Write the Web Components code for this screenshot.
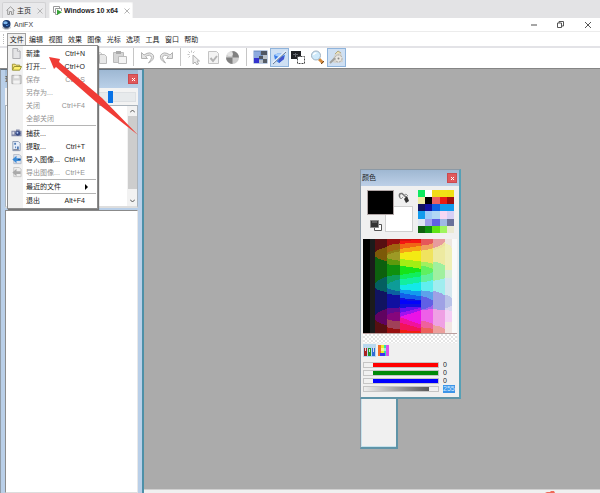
<!DOCTYPE html>
<html lang="zh-CN">
<head>
<meta charset="utf-8">
<title>AniFX</title>
<style>
body{margin:0;background:#ababab;color:#1c1c1c;font:7px/10px "Liberation Sans","Noto Sans CJK SC",sans-serif}
</style>
</head>
<body>
<ani-app></ani-app>
<script>
const base = `*{box-sizing:border-box}button,input{font:inherit;color:inherit;border:0;padding:0;margin:0;background:none;border-radius:0}svg{display:block}`;
function define(name, css, html, setup) {
  const t = document.createElement('template');
  t.innerHTML = `<style>${base}${css}</style>${html}`;
  customElements.define(name, class extends HTMLElement {
    constructor() {
      super();
      this.attachShadow({ mode: 'open' }).append(t.content.cloneNode(true));
      if (setup) setup(this.shadowRoot, this);
    }
  });
}

const closeX = `<svg width="6" height="6" viewBox="0 0 6 6"><path d="M.5.5 5.500 5.500M5.500.5.5 5.500" stroke="#b4b4b4" fill="none"/></svg>`;

define('vm-tabs', `
:host{display:flex;height:18px;background:#e3e3e5;padding:2px 2px 0;gap:3px}
.tab{display:flex;align-items:center;height:16px;padding:0 2px 0 3px;border-radius:2px 2px 0 0;background:#e9e9eb;border:1px solid #d2d2d4;border-bottom:0}
.tab.on{background:#fff;font-weight:bold;border-color:#f4f4f4}
.tab button{display:flex;align-items:center}
.name{gap:2px}
.close{margin-left:6px}`,
`<div class="tab"><button class="name"><svg width="9" height="9" viewBox="0 0 9 9" fill="none" stroke="#999"><path d="M.5 4.500 4.500.8 8.500 4.500M1.700 4V8.500H3.500V5.500h2v3h1.800V4"/></svg>主页</button><button class="close" aria-label="关闭主页">${closeX}</button></div>
<div class="tab on"><button class="name"><svg width="9" height="9" viewBox="0 0 9 9" fill="none"><path d="M6.500 2.500V.5h-6v6h2M8.500 5V2.500h-6v6H5" stroke="#9a9a9a"/><path d="M4 3.500 9 6.300 4 9z" fill="#39a339"/></svg>Windows 10 x64</button><button class="close" aria-label="关闭虚拟机">${closeX}</button></div>`);

define('title-bar', `
:host{display:flex;align-items:center;height:14px;background:#fff;border-bottom:1px solid #ececec;padding:0 9px 0 2px;gap:3px;color:#444}
.win{margin-left:auto;display:flex;gap:20px}
.win button{width:7px;height:9px;display:flex;align-items:center;justify-content:center}`,
`<svg width="9" height="10" viewBox="0 0 9 10"><path d="M1 5.500h7L9 8 6 9.800H3L0 8z" fill="#bfc4ce"/><circle cx="4.500" cy="4" r="4" fill="#16376e"/><ellipse cx="3.500" cy="2.800" rx="2.200" ry="1.500" fill="#7eb7ee"/><path d="M4 5.500q2 .8 3-1.200" stroke="#4b8ce0" fill="none"/><path d="M2.500 8h4" stroke="#454c5c"/></svg><span>AniFX</span>
<span class="win"><button aria-label="最小化"><svg width="6" height="2"><path d="M0 1h6" stroke="#888" stroke-width="1.500"/></svg></button>
<button aria-label="还原"><svg width="7" height="7" viewBox="0 0 7 7" fill="none" stroke="#555"><path d="M.5 2h4v4.500h-4zM2 2V.5h4.500V5H4.500"/></svg></button>
<button aria-label="关闭"><svg width="6" height="6" viewBox="0 0 6 6"><path d="m0 0 6 6M6 0 0 6" stroke="#555"/></svg></button></span>`);

define('menu-bar', `
:host{display:flex;height:16px;background:#fff;border-bottom:2px solid #e3e3e7;padding-left:3px}
.grip{width:4px;margin:2px 0;border-left:1px dotked #bbb;border-left:1px dotted #bbb}
nav{display:grid;grid-template-columns:repeat(10,1fr);flex:0 0 194px}
button{white-space:nowrap;padding-top:1px}
button[aria-expanded]{background:#f0f0f0;border:1px solid #a2a2a2;border-bottom:0;padding-top:0;margin-top:1px}`,
`<span class="grip"></span><nav><button aria-expanded="true">文件</button><button>编辑</button><button>视图</button><button>效果</button><button>图像</button><button>光标</button><button>选项</button><button>工具</button><button>窗口</button><button>帮助</button></nav>`);

const arrowL = `<path d="M5.500 2 1 6l4.500 4V7.500H10v-3H5.500z"`;
const icons = {
  none: '',
  doc: `<path d="M1.500.5h5l3 3v8h-8z" fill="#e4e4e6" stroke="#a9a9ad"/><path d="M6.500.5v3h3" fill="#fff" stroke="#a9a9ad"/>`,
  open: `<path d="M1 9.500v-6h3l1 1h4V6" fill="#f6e27a" stroke="#9c9230"/><path d="M1 10 3 6h8l-2 4z" fill="#fff06e" stroke="#8e8a2c"/>`,
  save: `<path d="M.5 1.500h10v9h-10z" fill="#d5d5d5" stroke="#aaa"/><path d="M3 1.500h5v3H3zM2 7h7v3.500H2z" fill="#f3f3f3"/>`,
  camera: `<path d="M0 3h5V1.500h4V3h2v6H0z" fill="#8289a8"/><circle cx="7" cy="5.800" r="2.600" fill="#374a86"/><circle cx="6.500" cy="5.200" r="1" fill="#b9d1f6"/><path d="M1 4h2v3H1z" fill="#d8dbe4"/>`,
  extract: `<path d="M1.500.5h6l2 2v8h-8z" fill="#e8effa" stroke="#8998b1"/><path d="M3 2h2v2H3zM6 6h2v3H6zM4 6h1v2H4z" fill="#4f7cb8"/><path d="M2 9.500h6" stroke="#667"/>`,
  imp: `<path d="M2.500.5h6l2 2v8h-8z" fill="#dce3ee" stroke="#b3bac6"/>${arrowL} fill="#3a8ad6"/><path d="M7 6h3" stroke="#174d91"/>`,
  exp: `<path d="M2.500.5h6l2 2v8h-8z" fill="#eee" stroke="#c4c4c4"/>${arrowL} fill="#aaa"/>`
};

define('menu-entry', `
:host{display:block}
button{display:flex;align-items:center;width:100%;height:13px;padding:0 11px 0 2px;text-align:left;gap:4px}
button:disabled{color:#929292}
.icon{width:11px;height:11px;flex:none}
.label{flex:1;white-space:nowrap}
.sub{width:3px;height:6px;margin-right:-8px}`,
`<button><svg class="icon" viewBox="0 0 11 12"></svg><span class="label"><slot></slot></span><span class="key"></span></button>`,
(r, el) => {
  r.querySelector('svg').innerHTML = icons[el.getAttribute('icon') || 'none'];
  r.querySelector('.key').textContent = el.getAttribute('key') || '';
  r.querySelector('button').disabled = el.hasAttribute('off');
  if (el.hasAttribute('sub')) r.querySelector('.key').innerHTML = '<svg class="sub" viewBox="0 0 3 6"><path d="M0 0 3 3 0 6z"/></svg>';
});

define('file-menu', `
:host{display:block;border:1px solid #8c8c8c;padding:1px;background:linear-gradient(90deg,#f1f1f1 15px,#fff 15px);box-shadow:1px 1px 1px #777}
hr{border:0;height:1px;background:#b5b5b5;margin:0 0 0 18px}
hr:first-of-type{margin-bottom:1px}`,
`<menu-entry icon="doc" key="Ctrl+N">新建</menu-entry><menu-entry icon="open" key="Ctrl+O">打开...</menu-entry><menu-entry icon="save" key="Ctrl+S" off>保存</menu-entry><menu-entry off>另存为...</menu-entry><menu-entry key="Ctrl+F4" off>关闭</menu-entry><menu-entry off>全部关闭</menu-entry><hr><menu-entry icon="camera">捕获...</menu-entry><menu-entry icon="extract" key="Ctrl+T">提取...</menu-entry><menu-entry icon="imp" key="Ctrl+M">导入图像...</menu-entry><menu-entry icon="exp" key="Ctrl+E" off>导出图像...</menu-entry><hr><menu-entry sub>最近的文件</menu-entry><hr><menu-entry key="Alt+F4">退出</menu-entry>`);

const tb = (label, art, on = '') => `<button aria-label="${label}" class="${on}"><svg width="15" height="15" viewBox="0 0 15 15" fill="none">${art}</svg></button>`;
define('tool-bar', `
:host{display:flex;height:21px;background:#fff;border-bottom:1px solid #858585;padding-left:91px}
button{width:19px;height:19px;display:flex;align-items:center;justify-content:center}
button.on{background:#cfe0f3;border:1px solid #8fb4dc}
i{width:1px;margin:0 4px;height:18px;background:#c6c6c6}`,
tb('复制', `<path d="M2.500 2.500h5l2 2v6h-7z" fill="#eee" stroke="#ccc"/><path d="M6.500 4.500h5l2 2v7h-7z" fill="#e8e8e8" stroke="#bcbcbc"/>`) +
tb('粘贴', `<path d="M1.500 2.500h10v10h-10z" fill="#d6d6d6" stroke="#bbb"/><path d="M4 1h5v3H4z" fill="#aaa"/><path d="M6.500 6.500h8v7h-8z" fill="#f4f4f4" stroke="#bbb"/>`) + '<i></i>' +
tb('撤销', `<path d="M1.500 2.500v6h6L5.500 6.500q5-3 6 1 0 2-3 5.500 6-3 5-7.500-3-5-9.500-.5z" fill="#e4e4e4" stroke="#b2b2b2"/>`) +
tb('重做', `<path d="M13.500 2.500v6h-6l2-2q-5-3-6 1 0 2 3 5.500-6-3-5-7.500 3-5 9.500-.5z" fill="#e4e4e4" stroke="#b2b2b2"/>`) + '<i></i>' +
tb('热点', `<path d="M6 5v9l2-2 2 3 1.500-1L10 11h2.500z" fill="#eee" stroke="#b0b0b0"/><path d="M4.500.5v2M.5 4.500h2M1.500 1.500l1.500 1.500M7.500 1.500 6 3M1.500 7.500 3 6" stroke="#c2c2c2"/>`) +
tb('检查', `<path d="M2.500 1.500h8l2 2v10h-10z" fill="#f3f3f3" stroke="#c4c4c4"/><path d="m4.500 8 2.500 3 4-5" stroke="#b4b4b4" stroke-width="2"/>`) +
tb('颜色', `<circle cx="7.500" cy="7.500" r="6.500" fill="#ccc"/><path d="M7.500 1A6.500 6.500 0 0 1 14 7.500H1A6.500 6.500 0 0 0 7.500 14z" fill="#808080"/><ellipse cx="5" cy="4" rx="3" ry="2" fill="#eee" opacity=".7"/>`) + '<i></i>' +
tb('预览', `<path d="M.5.5h14v13H.5z" fill="#7797c9"/><path d="M1 2h6v6H1z" fill="#8daade"/><path d="M1 8h5v5H1z" fill="#3432ce"/><path d="M8 1h6v4H8zM6 6h4v3H6z" fill="#4e5563"/><path d="M10 5h4v4h-4zM6 10h4v3H6z" fill="#b9c1cb"/><path d="M10 9h4v4h-4z" fill="#555c65"/>`) +
tb('透明', `<path d="M2 5 7 3l6 2-1 4-5 4-4-3z" fill="#387be7"/><path d="m2 5 5 2 6-2-6-2z" fill="#a9cffb"/><path d="M7 8v5l5-4V6z" fill="#4556cd"/><path d="M1 13 14 1" stroke="#e6f0fb" stroke-width="2"/><path d="m1 14 13-12" stroke="#6a7b94"/>`, 'on') +
tb('网格', `<path d="M0 1h10v8H0z" fill="#202124"/><path d="M2 4.500h5M4.500 3v4" stroke="#63666c"/><path d="M6.500 6.500h7v7h-7z" fill="#fff" stroke="#444" stroke-dasharray="2 1"/>`) +
tb('缩放', `<path d="m9 9 4 4" stroke="#d4893a" stroke-width="3"/><path d="m11 14 3-3" stroke="#704820"/><circle cx="6" cy="5.500" r="4.500" fill="#cfeafb" stroke="#9fb0bf"/><path d="M3.500 5q.5-2 3-2" stroke="#fff" stroke-width="1.500"/>`) +
tb('工具', `<path d="M5 6q2-5 7-4l1 4 1 6-8 1-3-1z" fill="#d4d3cf"/><circle cx="9.500" cy="8.500" r="3.500" fill="#e9e7e2" stroke="#aaa8a2" stroke-dasharray="2 1"/><circle cx="9.500" cy="8.500" r="1" fill="#888"/><path d="m1 13 5-5" stroke="#a0a19f" stroke-width="2"/><path d="m6 4 3-3 3 2" fill="#eee2b5" stroke="#b1a883"/>`, 'on'));

const redClose = `<button class="x" aria-label="关闭"><svg width="3" height="3"><path d="M0 0l3 3M3 0 0 3" stroke="#fff"/></svg></button>`;
const xCss = `.x{width:10px;height:10px;background:#e0595c;border:1px solid #cb4a50;display:flex;align-items:center;justify-content:center;margin-left:auto}`;

define('side-panel', `
:host{display:flex;flex-direction:column;background:#b9cfe8;border:1px solid #929da8;border-top-color:#62717f;border-right:2px solid #4c90a8;border-bottom:0;padding:0 4px}
header{display:flex;align-items:center;height:18px;background:linear-gradient(#9eb8d3,#bad0e8)}
${xCss}
.bar{height:17px;background:#f3f3f3;display:flex;justify-content:flex-end;align-items:center;padding:0 2px}
input{appearance:none;width:66px;height:10px;background:#e7eaec;border:1px solid #dde0e3}
input::-webkit-slider-thumb{appearance:none;width:5px;height:12px;background:#0872e6}
.list{height:103px;background:#fff;border:1px solid #aab3bb;border-bottom:2px solid #dedede;display:flex;justify-content:flex-end}
.scroll{width:10px;background:#f2f2f2;display:flex;flex-direction:column;align-items:center}
.scroll button{height:10px;width:9px;display:flex;align-items:center;justify-content:center}
.thumb{flex:0 1 73px;background:#cdcdcd;width:9px;margin-bottom:auto}
.frames{flex:1;background:#fff;border:1px solid #8b8b8b;border-right-color:#e8e8e8;border-bottom-color:#ddd;margin-top:2px}`,
`<header>查找${redClose}</header><div class="bar"><input type="range" min="0" max="100" value="62" aria-label="大小"></div>
<div class="list"><div class="scroll"><button aria-label="向上"><svg width="5" height="4"><path d="M0 3.500 2.500 1 5 3.500" fill="none" stroke="#555"/></svg></button><span class="thumb"></span><button aria-label="向下"><svg width="5" height="4"><path d="M0 .5 2.500 3 5 .5" fill="none" stroke="#555"/></svg></button></div></div><div class="frames"></div>`);

/* Each column: x start, x end, then bands as [colour, top at left edge, top at right edge]. */
const spectrum = [
  [0, 22, ['#000', 0, 0]],
  [20, 36, ['#1b1b1b', 0, 0]],
  [35, 72, ['#561011', 0, 0], ['#7c5908', 46, 24], ['#0d600e', 47, 67], ['#045f60', 143, 113], ['#111460', 144, 160], ['#600360', 237, 210], ['#561011', 238, 260]],
  [71, 114, ['#981010', 0, 0], ['#a06410', 24, 13], ['#8f7d14', 46, 30], ['#9d9a25', 53, 37], ['#5e9a0c', 54, 66], ['#0f900f', 74, 80], ['#0e9c5e', 115, 107], ['#0e9c98', 143, 121], ['#0c60a0', 144, 158], ['#1010a0', 162, 170], ['#600a90', 210, 206], ['#86067c', 232, 218], ['#a04058', 240, 248], ['#981010', 264, 272]],
  [113, 177, ['#d51212', 0, 0], ['#f41512', 6, 3], ['#f06416', 14, 12], ['#f5a315', 30, 20], ['#f3ea13', 42, 34], ['#a2ee14', 60, 68], ['#16e419', 80, 90], ['#11ee5e', 108, 98], ['#12ee9f', 122, 112], ['#13e8e9', 140, 130], ['#129bee', 152, 158], ['#1260e9', 162, 173], ['#1010e0', 178, 184], ['#0303fb', 184, 188], ['#1010e0', 197, 194], ['#6210ef', 207, 204], ['#a112ef', 222, 207], ['#eb12e6', 234, 214], ['#f0129c', 236, 258], ['#f21358', 252, 270], ['#ef2012', 274, 279]],
  [176, 213, ['#e65759', 0, 0], ['#f0a05e', 20, 10], ['#f0e35e', 35, 24], ['#a0f05f', 68, 78], ['#5ff060', 80, 95], ['#60f09d', 110, 96], ['#60eeef', 130, 121], ['#5da2eb', 155, 162], ['#6060e5', 172, 191], ['#a061eb', 213, 192], ['#ed60e8', 214, 208], ['#ef609d', 246, 260], ['#ec615b', 266, 273]],
  [212, 249, ['#e79b9d', 0, 0], ['#efe09e', 27, 2], ['#edeaa0', 34, 14], ['#a0f09f', 68, 84], ['#a0edef', 126, 114], ['#9fa1e5', 156, 176], ['#efa0e4', 212, 214], ['#ec9f9c', 259, 275]],
  [248, 269, ['#eee6df', 0, 0], ['#f0efb6', 12, 32], ['#d9efd8', 92, 95], ['#d4e7ef', 116, 120], ['#b9c3e9', 168, 180], ['#d9d6f0', 208, 198], ['#f4cff4', 214, 218], ['#f1e5e2', 250, 250]],
  [268, 284, ['#fafafa', 0, 0]]
];
const bandEdge = (a, b, l, t) => a < 113 ? `Q${a} ${l + (t - l) * .6} ${b} ${t}` : a > 113 ? `Q${b} ${l + (t - l) * .4} ${b} ${t}` : `L${b} ${t}`;
define('color-spectrum', `:host{display:block;border-bottom:1px solid #b9a0a0}svg{width:100%;height:94px}`,
`<svg viewBox="0 0 284 283" preserveAspectRatio="none" shape-rendering="crispEdges" role="img" aria-label="色谱"></svg>`,
r => {
  r.querySelector('svg').innerHTML = spectrum.map(([a, b, ...bands]) =>
    bands.map(([c, l, t]) => `<path fill="${c}" d="M${a} ${l}${bandEdge(a, b, l, t)}V283H${a}z"/>`).join('')).join('');
});

define('channel-row', `
:host{display:flex;align-items:center;gap:4px;height:8px}
.range{appearance:none;width:76px;height:6px;background:var(--fill);border:1px solid #c5c5c5}
.range::-webkit-slider-thumb{appearance:none;width:9px;height:4px;background:#f1f1f1}
.value{width:12px;height:8px;line-height:8px}
:host([sel]) .value{background:#3c94e8;color:#d5eaff}`,
`<input class="range" type="range" min="0" max="255"><input class="value">`,
(r, el) => {
  const [range, value] = r.querySelectorAll('input');
  range.value = value.value = el.getAttribute('value');
  range.ariaLabel = el.getAttribute('name');
  value.ariaLabel = el.getAttribute('name') + '值';
});

const palette = ['#0fe960', '#fff', '#f1dc18', '#f1e116', '#efe014', '#eeeba0', '#000', '#ec605f', '#e91c14', '#9d1010', '#131362', '#1010a0', '#105fe0', '#129bed', '#129bed', '#129bed', '#9fcaf8', '#b0d8f5', '#f6d7f3', '#d6cff5', '#dfe6f3', '#9fa0ec', '#6060e4', '#9fb9e4', '#69719a', '#0f610f', '#109110', '#5fe414', '#a0f55f', '#eae9d2'];
define('color-window', `
:host{display:flex;flex-direction:column;background:#f0f0f0;border:1px solid #8c99a5;border-right:2px solid #56a0b6;border-bottom:2px solid #5f94a8;padding:0 2px 4px}
header{display:flex;align-items:center;height:16px;background:linear-gradient(#9fb8d2,#bdd0e7);margin:0 -2px;padding:0 2px 0 1px}
${xCss}
.top{display:grid;grid-template-columns:1fr 36px;height:53px;padding:4px 3px 0 4px}
.pair{display:grid;grid-template-columns:18px 9px 19px;grid-template-rows:16px 9px 17px}
.fg{grid-area:1/1/3/3;background:#000;border:1px solid #b0a6a6;z-index:1}
.bg{grid-area:2/2/4/4;background:#fff;border:1px solid #d0d0d0}
.swap{grid-area:1/3;display:grid;place-items:center}
.reset{grid-area:3/1;display:grid;place-items:end center}
.pal{display:grid;grid-template-columns:repeat(5,1fr);height:43px}
.check{height:9px;background:repeating-conic-gradient(#e4e4e4 0 25%,#fff 0 50%) 0 0/4px 4px}
.modes{display:flex;height:18px;gap:1px;padding-top:1px}
.modes button{width:13px;height:13px;display:grid;place-items:center}
.modes .on{background:#b8d8ef}
.channels{display:grid}`,
`<header>颜色${redClose}</header>
<div class="top"><div class="pair"><button class="fg" aria-label="前景色"></button><button class="bg" aria-label="背景色"></button>
<button class="swap" aria-label="交换"><svg width="12" height="12" viewBox="0 0 12 12" fill="none"><path d="M2 6Q0 1 4 1.500L9 6" stroke="#777" stroke-width="1.500"/><path d="m1 5 2 2 2-2M5 4l3-2 2 2" stroke="#999"/><path d="m6 7 3-3 2 5-3 2z" fill="#333"/></svg></button>
<button class="reset" aria-label="默认颜色"><svg width="13" height="13" viewBox="0 0 13 13"><path d="M4.500 5.500h7v6h-7z" fill="#fff" stroke="#555"/><path d="M.5 1.500h8v7h-8z" fill="#333" stroke="#888"/><path d="M2 3h5" stroke="#888"/></svg></button></div><div class="pal"></div></div>
<color-spectrum></color-spectrum><div class="check"></div>
<div class="modes"><button class="on" aria-label="滑块"><svg width="11" height="10"><path d="M0 2h3v8H0z" fill="#a82222"/><path d="M4 2h3v8H4z" fill="#209428"/><path d="M8 2h3v8H8z" fill="#316bd4"/><path d="M1.500 1v4M5.500 3v3M9.500 1v5" stroke="#ddd"/></svg></button><button aria-label="光谱"><svg width="11" height="11"><path d="M0 0h3v11H0z" fill="#f36a28"/><path d="M3 0h3v11H3z" fill="#e8ee28"/><path d="M6 0h2v11H6z" fill="#30dfad"/><path d="M8 0h3v11H8z" fill="#db4ff0"/><path d="M2 8h5v3H2z" fill="#4030ee"/><path d="M3 3h5v3H3z" fill="#fff" opacity=".5"/></svg></button></div>
<div class="channels"><channel-row name="红" value="0" style="--fill:#f00"></channel-row><channel-row name="绿" value="0" style="--fill:#008a08"></channel-row><channel-row name="蓝" value="0" style="--fill:#00f"></channel-row><channel-row name="透明度" value="255" sel style="--fill:linear-gradient(90deg,#eee,#444)"></channel-row></div>`,
r => { r.querySelector('.pal').innerHTML = palette.map(c => `<span style="background:${c}"></span>`).join(''); });

define('tool-window', `:host{display:block;background:#f0f0f0;border:2px solid #5f94a8;border-left:1px solid #8c99a5;box-shadow:inset 1px -1px #c5e2ec}`, ``);

define('status-bar', `:host{display:flex;height:4px;background:#f0f0f0;border-top:1px solid #d0d0d0;justify-content:flex-end;align-items:flex-end;padding-right:45px;overflow:hidden}`,
`<svg width="10" height="2"><path d="M0 2 2 1h3l1-1h3l1 2z" fill="#ef6a58"/></svg>`);

define('ani-app', `
:host{display:flex;flex-direction:column;min-height:100vh;position:relative}
main{flex:1;display:flex}
side-panel{flex:0 0 144px}
.work{flex:1;display:flex;flex-direction:column;position:relative}
.canvas{flex:1;background:#ababab}
color-window{position:absolute;left:216px;top:100px;width:101px}
tool-window{position:absolute;left:216px;top:327px;width:38px;height:53px}
file-menu{position:absolute;left:7px;top:45px;width:91px}
.pointer{position:absolute;left:48px;top:56px;pointer-events:none}`,
`<vm-tabs></vm-tabs><title-bar></title-bar><menu-bar></menu-bar><tool-bar></tool-bar>
<main><side-panel></side-panel><div class="work"><div class="canvas"></div><status-bar></status-bar><tool-window></tool-window><color-window></color-window></div></main>
<file-menu></file-menu>
<svg class="pointer" width="91" height="80"><path d="M1 1 12 3 11 6 54 42 90 79 48 46 8 11 6 13z" fill="#f03c36"/></svg>`);
</script>
</body>
</html>
